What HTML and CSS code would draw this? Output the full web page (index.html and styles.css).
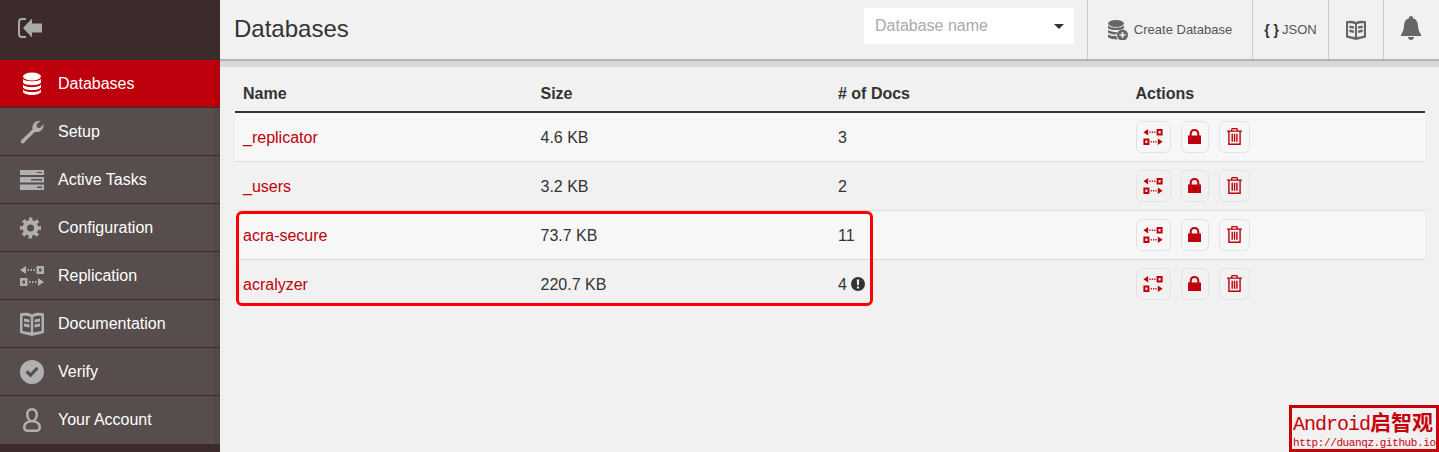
FILE: index.html
```html
<!DOCTYPE html>
<html lang="en">
<head>
    <meta charset="UTF-8">
    <meta name="viewport" content="width=device-width, initial-scale=1.0">
    <title>Databases</title>
    <link rel="stylesheet" href="styles.css">
</head>
<body>
<svg class="icon-defs" xmlns="http://www.w3.org/2000/svg">
    <symbol id="i-replicate" viewBox="0 0 24 20">
        <path d="M0 4L6 0V8Z"/>
        <path d="M7.500 3h1.500v2H7.500zM10.500 3h1.500v2H10.500zM13.500 3h1.500v2H13.500z"/>
        <path fill-rule="evenodd" d="M16.500 0H24V8H16.500ZM19 2.500V5.500H21.500V2.500Z"/>
        <path fill-rule="evenodd" d="M0 12H7.500V20H0ZM2.500 14.500V17.500H5V14.500Z"/>
        <path d="M9 15h1.500v2H9zM12 15h1.500v2H12zM15 15h1.500v2H15z"/>
        <path d="M24 16L18 20V12Z"/>
    </symbol>
    <symbol id="i-book" viewBox="0 0 24 24">
        <path fill-rule="evenodd" d="M0 1.500C4 0.500 9 0.500 12 2.500C15 0.500 20 0.500 24 1.500V21L12 24L0 21ZM2.500 4V19L10.800 20.500V5C8 3.800 5 3.500 2.500 4ZM21.500 4C19 3.500 16 3.800 13.200 5V20.500L21.500 19ZM4 6.500L9.500 7.500V10.500L4 9.500ZM20 6.500V9.500L14.500 10.500V7.500ZM4 11.500L9.500 12.500V15.500L4 14.500ZM20 11.500V14.500L14.500 15.500V12.500Z"/>
    </symbol>
    <symbol id="i-lock" viewBox="0 0 14 16">
        <path fill-rule="evenodd" d="M0 7H1.800V5C1.800 2 4 0 7 0S12.200 2 12.200 5V7H14V16H0ZM4 7H10V5C10 3.200 8.700 2 7 2S4 3.200 4 5Z"/>
    </symbol>
    <symbol id="i-trash" viewBox="0 0 16 18">
        <path fill-rule="evenodd" d="M5 0H11L12 2.500H16V4H14.700V18H1.300V4H0V2.500H4ZM6 1.300L5.500 2.500H10.500L10 1.300ZM2.800 4V16.500H13.200V4ZM4.800 6H6.300V14.500H4.800ZM7.300 6H8.800V14.500H7.300ZM9.800 6H11.300V14.500H9.800Z"/>
    </symbol>
</svg>

<aside class="sidebar">
    <div class="sidebar-top">
        <svg class="collapse-icon" viewBox="0 0 24 20">
            <path d="M8 1H4C2 1 1 2 1 4V16C1 18 2 19 4 19H8" fill="none" stroke-width="2"/>
            <path class="solid" d="M5 10L14 0.500V5.500H24V14.500H14V19.500Z"/>
        </svg>
    </div>
    <nav class="nav">
        <a class="nav-item active">
            <svg class="nav-icon" viewBox="0 0 20 24">
                <ellipse cx="10" cy="4.500" rx="9" ry="4"/>
                <path d="M1 7C3 10 17 10 19 7V10.500C17 14 3 14 1 10.500Z"/>
                <path d="M1 12.500C3 16 17 16 19 12.500V15.500C17 19 3 19 1 15.500Z"/>
                <path d="M1 17.500C3 21 17 21 19 17.500V20C17 24 3 24 1 20Z"/>
            </svg>
            <span>Databases</span>
        </a>
        <a class="nav-item">
            <svg class="nav-icon" viewBox="0 0 24 24">
                <path d="M1 20.500L12.500 9.500C11.500 5 15 0.500 20.500 0.800L16.500 4.500L17 7.500L20 8L23.800 4C24 9.500 19.500 13 15 11.800L3.500 23.300C2 24 0 22 1 20.500Z"/>
            </svg>
            <span>Setup</span>
        </a>
        <a class="nav-item">
            <svg class="nav-icon" viewBox="0 0 24 20">
                <path fill-rule="evenodd" d="M0 0H24V5H0ZM17 2V3H22V2Z"/>
                <path fill-rule="evenodd" d="M0 7H24V12.500H0ZM11 9V10.500H22V9Z"/>
                <path fill-rule="evenodd" d="M0 14.500H24V20H0ZM17 16.500V18H22V16.500Z"/>
            </svg>
            <span>Active Tasks</span>
        </a>
        <a class="nav-item">
            <svg class="nav-icon gear" viewBox="-12 -13.700 27.400 27.400">
                <circle r="6.500" stroke-width="5"/>
                <circle r="10" stroke-width="4" stroke-dasharray="4 3.854" stroke-dashoffset="2" transform="rotate(-90)"/>
            </svg>
            <span>Configuration</span>
        </a>
        <a class="nav-item">
            <svg class="nav-icon"><use href="#i-replicate"/></svg>
            <span>Replication</span>
        </a>
        <a class="nav-item">
            <svg class="nav-icon"><use href="#i-book"/></svg>
            <span>Documentation</span>
        </a>
        <a class="nav-item">
            <svg class="nav-icon" viewBox="0 0 24 24">
                <path fill-rule="evenodd" d="M12 0A12 12 0 1 0 12 24A12 12 0 1 0 12 0ZM18.500 9L10.500 17.500L5.500 12.500L7.800 10.200L10.500 13L16.200 6.800Z"/>
            </svg>
            <span>Verify</span>
        </a>
        <a class="nav-item">
            <svg class="nav-icon" viewBox="0 0 24 24">
                <path fill-rule="evenodd" d="M12 0C8 0 6 3 6 6.500C6 9 7 11 8.500 12.500C5 13.500 3 16 3 19C3 22.500 5 24 8 24H16C19 24 21 22.500 21 19C21 16 19 13.500 15.500 12.500C17 11 18 9 18 6.500C18 3 16 0 12 0ZM12 2.500C14.500 2.500 15.500 4.300 15.500 6.500C15.500 9.500 14 12 12 12S8.500 9.500 8.500 6.500C8.500 4.300 9.500 2.500 12 2.500ZM10 14.500H14C17 15 18.500 17 18.500 19C18.500 20.800 17.500 21.500 16 21.500H8C6.500 21.500 5.500 20.800 5.500 19C5.500 17 7 15 10 14.500Z"/>
            </svg>
            <span>Your Account</span>
        </a>
    </nav>
</aside>

<main class="main">
    <header class="topbar">
        <h1>Databases</h1>
        <div class="db-select">
            <span>Database name</span>
            <i class="caret"></i>
        </div>
        <a class="top-btn create">
            <svg class="create-icon" viewBox="0 0 20 20">
                <ellipse cx="8" cy="3.500" rx="8" ry="3.500"/>
                <path d="M0 5.500C3 8.500 13 8.500 16 5.500V8.200C13 10.700 3 10.700 0 8.200Z"/>
                <path d="M0 9.800C3 12.200 8 12.500 10 12C9 13 8.500 13.800 8.500 14.500C5 14.500 2 14 0 12.500Z"/>
                <path d="M0 14.200C2 15.700 5 16 8.500 16C8.500 17 9 18.500 9.800 19.500C5 19.500 2 19 0 17.300Z"/>
                <path fill-rule="evenodd" d="M14.500 9.500A5.500 5.500 0 1 0 14.500 20.500A5.500 5.500 0 1 0 14.500 9.500ZM13.700 12H15.300V14.200H17.500V15.800H15.300V18H13.700V15.800H11.500V14.200H13.700Z"/>
            </svg>
            Create Database
        </a>
        <a class="top-btn json"><b>{ }</b> JSON</a>
        <a class="top-btn book"><svg class="book-icon"><use href="#i-book"/></svg></a>
        <a class="top-btn bell">
            <svg class="bell-icon" viewBox="0 0 20 24">
                <path d="M10 0C11.200 0 12 0.800 12 2.200C15.500 3 16.800 6 17 9.500C17.200 13.500 18 16 20 18.500V20H0V18.500C2 16 2.800 13.500 3 9.500C3.200 6 4.500 3 8 2.200C8 0.800 8.800 0 10 0ZM7 21H13C13 23 11.500 24 10 24S7 23 7 21Z"/>
            </svg>
        </a>
    </header>
    <div class="band"></div>

    <div class="content">
        <table class="db-table">
            <thead>
                <tr><th>Name</th><th>Size</th><th># of Docs</th><th>Actions</th></tr>
            </thead>
            <tbody>
                <tr>
                    <td><a>_replicator</a></td><td>4.6 KB</td><td>3</td>
                    <td><div class="actions">
                        <a class="act wide"><svg class="ic-rep"><use href="#i-replicate"/></svg></a>
                        <a class="act lock"><svg class="ic-lock"><use href="#i-lock"/></svg></a>
                        <a class="act"><svg class="ic-trash"><use href="#i-trash"/></svg></a>
                    </div></td>
                </tr>
                <tr>
                    <td><a>_users</a></td><td>3.2 KB</td><td>2</td>
                    <td><div class="actions">
                        <a class="act wide"><svg class="ic-rep"><use href="#i-replicate"/></svg></a>
                        <a class="act lock"><svg class="ic-lock"><use href="#i-lock"/></svg></a>
                        <a class="act"><svg class="ic-trash"><use href="#i-trash"/></svg></a>
                    </div></td>
                </tr>
                <tr>
                    <td><a>acra-secure</a></td><td>73.7 KB</td><td>11</td>
                    <td><div class="actions">
                        <a class="act wide"><svg class="ic-rep"><use href="#i-replicate"/></svg></a>
                        <a class="act lock"><svg class="ic-lock"><use href="#i-lock"/></svg></a>
                        <a class="act"><svg class="ic-trash"><use href="#i-trash"/></svg></a>
                    </div></td>
                </tr>
                <tr>
                    <td><a>acralyzer</a></td><td>220.7 KB</td>
                    <td>4 <svg class="warn" viewBox="0 0 14 14"><path fill-rule="evenodd" d="M7 0A7 7 0 1 0 7 14A7 7 0 1 0 7 0ZM5.800 2.500H8.200L7.900 8.300H6.100ZM5.900 9.500H8.100V11.500H5.900Z"/></svg></td>
                    <td><div class="actions">
                        <a class="act wide"><svg class="ic-rep"><use href="#i-replicate"/></svg></a>
                        <a class="act lock"><svg class="ic-lock"><use href="#i-lock"/></svg></a>
                        <a class="act"><svg class="ic-trash"><use href="#i-trash"/></svg></a>
                    </div></td>
                </tr>
            </tbody>
        </table>
    </div>

    <div class="highlight"></div>
    <div class="watermark">
        <div class="wm-title">Android<span>启智观</span></div>
        <div class="wm-url">http://duanqz.github.io</div>
    </div>
</main>
</body>
</html>
```

FILE: styles.css
```css
* {
    box-sizing: border-box;
}

html, body {
    height: 100%;
    margin: 0;
    overflow: hidden;
}

body {
    display: flex;
    font-family: "Liberation Sans", Arial, sans-serif;
    font-size: 16px;
    color: #333;
    background-color: #f1f1f1;
}

.icon-defs {
    position: absolute;
    width: 0;
    height: 0;
}

/* sidebar */
.sidebar {
    width: 220px;
    flex: none;
    background-color: #3c2b2a;
}

.sidebar-top {
    height: 60px;
    padding: 18px 0 0 18px;
}

.collapse-icon {
    display: block;
    width: 24px;
    height: 20px;
    stroke: #a9a9a9;
    fill: none;
}

.collapse-icon .solid {
    fill: #a9a9a9;
    stroke: none;
}

.nav-item {
    display: flex;
    align-items: center;
    height: 48px;
    padding-left: 20px;
    color: #fff;
    background-color: #574d4c;
    background-image: linear-gradient(to right, transparent 214px, rgba(0, 0, 0, 0.06) 214px);
    border-bottom: 1px solid #3c2b2a;
}

.nav-item:last-child {
    border-bottom: none;
}

.nav-item.active {
    background-color: #bd000b;
}

.nav-icon {
    width: 24px;
    height: 24px;
    margin-right: 14px;
    flex: none;
    fill: #b0b0b0;
}

.active .nav-icon {
    fill: #fff;
}

.gear circle {
    fill: none;
    stroke: #b0b0b0;
}

/* main area */
.main {
    flex: 1;
    position: relative;
    min-width: 0;
}

.topbar {
    display: flex;
    align-items: stretch;
    height: 61px;
    background-color: #f1f1f1;
    border-bottom: 2px solid #b4b4b4;
}

.topbar h1 {
    margin: 0;
    padding: 0 0 1px 14px;
    flex: 1;
    align-self: center;
    font-size: 24px;
    font-weight: normal;
}

.db-select {
    display: flex;
    align-items: center;
    justify-content: space-between;
    width: 210px;
    height: 36px;
    margin: 8px 13px 0 0;
    padding: 0 10px 0 11px;
    color: #aaa;
    background-color: #fff;
}

.caret {
    border-left: 5px solid transparent;
    border-right: 5px solid transparent;
    border-top: 5px solid #333;
}

.top-btn {
    display: flex;
    align-items: center;
    justify-content: center;
    font-size: 13px;
    color: #555;
    border-left: 1px solid #ccc;
}

.top-btn.create {
    width: 165px;
    gap: 6px;
}

.top-btn.json {
    width: 76px;
    gap: 3px;
}

.top-btn.json b {
    color: #333;
    font-size: 14px;
}

.top-btn.book {
    width: 55px;
}

.top-btn.bell {
    width: 56px;
    padding-right: 2px;
}

.create-icon {
    width: 20px;
    height: 20px;
    fill: #666;
}

.book-icon {
    width: 20px;
    height: 20px;
    fill: #666;
}

.bell-icon {
    width: 20px;
    height: 24px;
    fill: #666;
    margin-bottom: 4px;
}

.band {
    height: 6px;
    background-color: #d9d9d9;
}

.content {
    padding: 0 14px 0 15px;
}

/* table */
.db-table {
    width: 100%;
    border-collapse: collapse;
    table-layout: fixed;
}

.db-table th {
    height: 45px;
    padding: 8px;
    text-align: left;
    vertical-align: bottom;
    border-bottom: 2px solid #333;
}

.db-table td {
    height: 49px;
    padding: 2px 8px 0;
    border-top: 1px solid #ddd;
}

.db-table tbody tr:nth-child(odd) {
    background-color: #f7f7f7;
}

.db-table td a {
    color: #bd000b;
}

.warn {
    width: 14px;
    height: 14px;
    vertical-align: -1px;
    fill: #333;
}

.actions {
    display: flex;
    gap: 10px;
    margin-top: -2px;
}

.act {
    display: flex;
    align-items: center;
    justify-content: center;
    width: 31px;
    height: 32px;
    border: 1px solid #e3e3e3;
    border-radius: 6px;
    fill: #bd000b;
}

.act.wide {
    width: 35px;
}

.act.lock {
    width: 28px;
}

.ic-rep {
    width: 20px;
    height: 16px;
}

.ic-lock {
    width: 13px;
    height: 15px;
}

.ic-trash {
    width: 15px;
    height: 17px;
}

/* annotation box drawn over the table */
.highlight {
    position: absolute;
    left: 16px;
    top: 211px;
    width: 637px;
    height: 95px;
    border: 3px solid #f00;
    border-radius: 6px;
}

.watermark {
    position: absolute;
    right: 0;
    bottom: 0;
    width: 150px;
    height: 47px;
    padding: 1px 1px;
    color: #c8000a;
    border: 3px solid #c8000a;
    overflow: hidden;
    white-space: nowrap;
}

.wm-title {
    font-family: "Liberation Mono", "Noto Sans CJK SC", monospace;
    font-size: 20px;
    line-height: 24px;
    letter-spacing: -1px;
}

.wm-title span {
    font-family: "Noto Sans CJK SC", sans-serif;
    font-weight: bold;
    font-size: 21px;
    letter-spacing: 0;
}

.wm-url {
    font-family: "Liberation Mono", monospace;
    font-size: 11px;
    line-height: 13px;
    letter-spacing: -0.4px;
}
```
